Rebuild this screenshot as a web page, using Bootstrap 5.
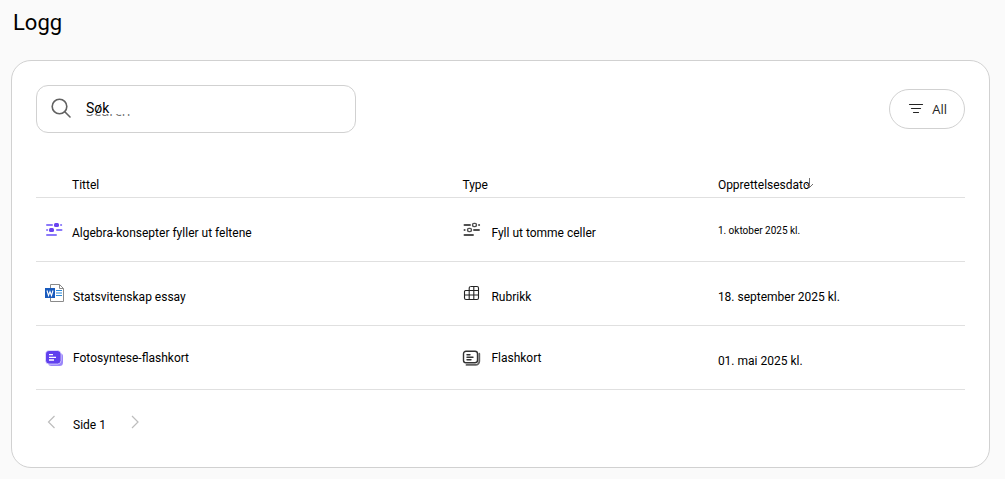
<!DOCTYPE html>
<html lang="nb">
<head>
<meta charset="utf-8">
<meta name="viewport" content="width=device-width, initial-scale=1">
<title>Logg</title>
<link href="https://cdn.jsdelivr.net/npm/bootstrap@5.3.0/dist/css/bootstrap.min.css" rel="stylesheet">
<style>
body { background: #fafafa; color: #000; font-family: Roboto, "Liberation Sans", sans-serif; font-size: 12px; line-height: 16px; }
h1 { font-size: 22px; line-height: 28px; padding-left: 2px; }
.page { padding: 9px 15px 12px 11px; }
.log-panel { border: 1px solid #d1d1d1; border-radius: 20px; padding: 24px 24px 34px; margin-top: 23px; background: #fff; }
.search-box { width: 320px; height: 48px; border: 1px solid #d1d1d1; border-radius: 12px; padding: 0 14px; gap: 15px; }
.search-box svg { margin-bottom: 2px; }
.search-box input { width: 100%; border: 0; outline: 0; padding: 0 0 2px; background: none; color: #000; font-size: 14px; line-height: 20px; }
.search-hint { left: 0; top: 3px; color: #707070; font-family: "Open Sans", sans-serif; font-size: 14px; line-height: 20px; clip-path: inset(13px 0 3px 0); pointer-events: none; }
.filter-btn { height: 40px; border: 1px solid #d1d1d1; border-radius: 20px; color: #242424; font-family: "Open Sans", sans-serif; font-size: 13px; line-height: 20px; padding: 0 17px 0 18px; }
.log-table { table-layout: fixed; --bs-table-bg: transparent; --bs-table-color: #000; border-color: #e0e0e0; margin: 36px 0 0; }
.log-table th, .log-table td { padding: 0; border-bottom: 1px solid #e0e0e0; }
.log-table th { height: 28px; padding-top: 5px; font-weight: 400; vertical-align: middle; }
.log-table td { height: 64px; padding-top: 2px; vertical-align: middle; }
.col-title { width: 45.9%; }
.col-type { width: 27.5%; }
.log-table th.lead-cell { padding-left: 36px; }
.log-table td.lead-cell { padding-left: 9px; }
.log-table .nudge { padding-top: 8px; }
.log-table td a { color: #000; text-decoration: none; }
.entry { gap: 9px; }
.entry svg { flex: none; margin-bottom: 8px; margin-left: -1px; margin-right: 1px; }
.lead-cell .entry svg { margin-left: 0; margin-right: 0; }
.entry.lower svg { margin-bottom: 0; }
.small-date { font-size: 10px; }
.sort-arrow { margin-left: -6px; margin-top: -5px; }
.pager { padding: 22px 8px 0; gap: 13px; }
.pager span { padding-top: 5px; }
.pager button { border: 0; background: none; padding: 0; line-height: 0; }
</style>
</head>
<body>
<main class="page">
  <h1 class="fw-normal mb-0">Logg</h1>
  <section class="log-panel">
    <div class="d-flex justify-content-between align-items-center">
      <div class="search-box d-flex align-items-center">
        <svg width="20" height="20" viewBox="0 0 20 20" fill="none" stroke="#616161" stroke-width="1.6" stroke-linecap="round" class="flex-shrink-0"><circle cx="8.500" cy="8.500" r="7.300"/><path d="M13.800 13.800 19 19"/></svg>
        <div class="position-relative flex-grow-1">
          <input type="text" value="Søk" aria-label="Søk">
          <span class="search-hint position-absolute" aria-hidden="true">Search</span>
        </div>
      </div>
      <button type="button" class="filter-btn bg-white d-flex align-items-center gap-2">
        <svg width="16" height="16" viewBox="0 0 16 16" stroke="#242424" stroke-width="1.200" stroke-linecap="round"><path d="M1.500 3.500h13M3.500 7.500h9M5.500 11.500h5"/></svg>
        All
      </button>
    </div>

    <table class="table log-table">
      <thead>
        <tr>
          <th class="col-title lead-cell" scope="col">Tittel</th>
          <th class="col-type" scope="col">Type</th>
          <th scope="col">
            <div class="d-flex align-items-center">Opprettelsesdato<svg class="sort-arrow" width="10" height="12" viewBox="0 0 10 12" fill="none" stroke="#707070"><path d="M5.500 1v9.500M2 7l3.500 3.500L9 7"/></svg></div>
          </th>
        </tr>
      </thead>
      <tbody>
        <tr>
          <td class="lead-cell nudge"><div class="entry d-flex align-items-center">
            <svg width="18" height="16" viewBox="0 0 18 16" fill="none" stroke="#8a78fa" stroke-width="2" stroke-linecap="round"><path d="M2 4h5M16 4h.2M2 9h.2M12 9h4.500M2 14h9"/><g stroke="none" fill="#6a43f0"><rect x="9" y="2" width="5" height="4" rx="1.500"/><rect x="4" y="7" width="5" height="4" rx="1.500"/></g></svg>
            <a href="#">Algebra-konsepter fyller ut feltene</a></div></td>
          <td class="nudge"><div class="entry d-flex align-items-center">
            <svg width="20" height="16" viewBox="0 0 20 16" fill="none" stroke="#505050" stroke-width="1.900" stroke-linecap="round"><path d="M3.500 4h5.500M18 4h.2M3.500 9h.2M13 9h5M3.500 14h8.500"/><g stroke-width="1.400"><rect x="11.500" y="2.400" width="4" height="3.200" rx="1.500"/><rect x="6.500" y="7.400" width="4" height="3.200" rx="1.500"/></g></svg>
            <span>Fyll ut tomme celler</span></div></td>
          <td><span class="small-date">1. oktober 2025 kl.</span></td>
        </tr>
        <tr>
          <td class="lead-cell nudge"><div class="entry d-flex align-items-center">
            <svg width="19" height="18" viewBox="0 0 19 18"><path d="M5.500.500h9l4 4v13h-13z" fill="#fff" stroke="#8a8a8a"/><path d="M14.500.500v4h4" fill="none" stroke="#8a8a8a"/><path d="M11 6.500h6M11 9h6M11 11.500h6" stroke="#2b88d8" stroke-width="1.200"/><rect y="4" width="10" height="10" fill="#185abd"/><path d="m2 6.500 1.500 5L5 7.500l1.500 4L8 6.500" fill="none" stroke="#fff" stroke-width="1.100"/></svg>
            <a href="#">Statsvitenskap essay</a></div></td>
          <td class="nudge"><div class="entry d-flex align-items-center">
            <svg width="20" height="16" viewBox="0 0 20 16" fill="none" stroke="#242424" stroke-width="1.100"><path d="M9.500 1.500H16a1.500 1.500 0 0 1 1.500 1.500v10a1.500 1.500 0 0 1-1.500 1.500H5a1.500 1.500 0 0 1-1.500-1.500V6.500A1 1 0 0 1 4.500 5.500h13M3.500 10h14M8.200 14.500V3a1.500 1.500 0 0 1 1.500-1.500M12.800 1.500v13"/></svg>
            <span>Rubrikk</span></div></td>
          <td class="nudge">18. september 2025 kl.</td>
        </tr>
        <tr>
          <td class="lead-cell"><div class="entry lower d-flex align-items-center">
            <svg width="19" height="16" viewBox="0 0 19 16"><rect x="3" y="3" width="15" height="13" rx="3.500" fill="#9a86fa"/><rect x=".5" y=".5" width="15.500" height="13.500" rx="3.500" fill="#6040ee" stroke="#fff" stroke-width=".6"/><path d="M4 4.700h4M4 7.400h7M4 10h5" stroke="#fff" stroke-width="1.300"/></svg>
            <a href="#">Fotosyntese-flashkort</a></div></td>
          <td><div class="entry lower d-flex align-items-center">
            <svg width="20" height="16" viewBox="0 0 20 16" fill="none" stroke="#333" stroke-width="1.400" stroke-linecap="round"><rect x="2.500" y="1.200" width="14" height="11.500" rx="2.500"/><path d="M6 4.700h3M6 7.200h6M6 9.700h4"/><path d="M18.300 3.700v7.500a3.700 3.700 0 0 1-3.700 3.700H5.500" stroke="#616161" stroke-width="1.800"/></svg>
            <span>Flashkort</span></div></td>
          <td class="nudge">01. mai 2025 kl.</td>
        </tr>
      </tbody>
    </table>

    <nav class="pager d-flex align-items-center" aria-label="Sider">
      <button type="button" aria-label="Forrige side"><svg width="16" height="16" viewBox="0 0 16 16" fill="none" stroke="#bdbdbd" stroke-width="1.200"><path d="M10.500 2 4.500 8l6 6"/></svg></button>
      <span>Side 1</span>
      <button type="button" class="ms-2" aria-label="Neste side"><svg width="16" height="16" viewBox="0 0 16 16" fill="none" stroke="#bdbdbd" stroke-width="1.200"><path d="m5 2 6 6-6 6"/></svg></button>
    </nav>
  </section>
</main>
<script src="https://cdn.jsdelivr.net/npm/bootstrap@5.3.0/dist/js/bootstrap.bundle.min.js"></script>
</body>
</html>
